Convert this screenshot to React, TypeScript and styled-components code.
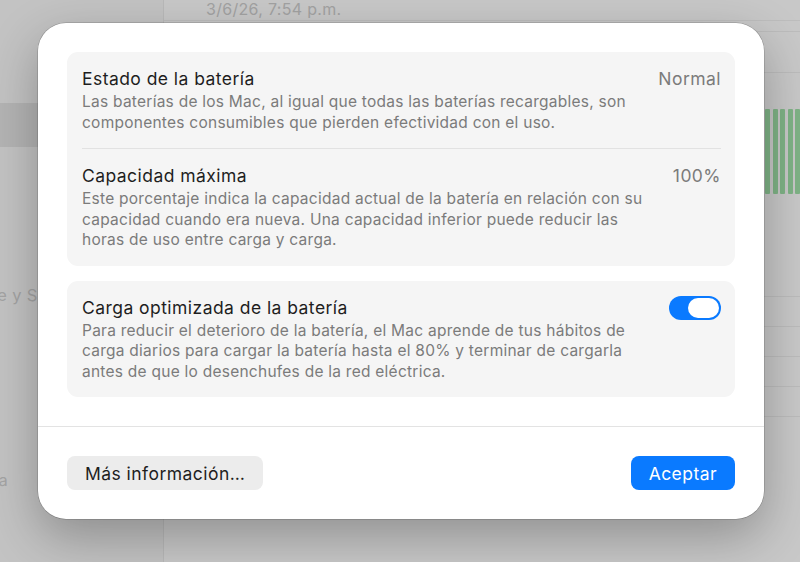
import React from "react";
import styled, { createGlobalStyle } from "styled-components";

const Global = createGlobalStyle`
  html, body { margin: 0; padding: 0; }
  body { font-family: Inter, "Noto Sans", "Liberation Sans", sans-serif; -webkit-font-smoothing: antialiased; }
`;

const Page = styled.div`
  position: relative;
  width: 800px;
  height: 562px;
  overflow: hidden;
  display: flex;
  background: #c6c6c6;
`;

const Sidebar = styled.aside`
  width: 163px;
  flex-shrink: 0;
  display: flex;
  flex-direction: column;
  padding-top: 103px;
  background: #c3c3c3;
  border-right: 1px solid #b9b9b9;
`;

const SideRow = styled.div<{ $selected?: boolean; $h: number; $right?: number }>`
  height: ${(p) => p.$h}px;
  display: flex;
  align-items: center;
  justify-content: flex-end;
  padding-right: ${(p) => p.$right ?? 0}px;
  background: ${(p) => (p.$selected ? "#b4b4b4" : "transparent")};
  color: #a4a4a4;
  font-size: 16.5px;
  letter-spacing: 0.3px;
  white-space: nowrap;
`;

const Main = styled.main`
  flex: 1;
  display: flex;
  flex-direction: column;
  background: #c8c8c8;
`;

const Header = styled.div`
  height: 22px;
  display: flex;
  align-items: center;
  padding-left: 42px;
  color: #a2a2a2;
  font-size: 16px;
  letter-spacing: 0.3px;
  border-bottom: 1px solid #bdbdbd;
  margin-top: -2px;
`;

const Line = styled.div<{ $gap: number }>`
  margin-top: ${(p) => p.$gap}px;
  height: 1px;
  background: #bcbcbc;
`;

const Chart = styled.div`
  margin-top: 36px;
  height: 85px;
  display: flex;
  justify-content: flex-end;
  gap: 2.5px;
`;

const Bar = styled.div`
  width: 5px;
  background: #7fb386;
  border-radius: 1px;
`;

const Modal = styled.div`
  position: absolute;
  left: 38px;
  top: 23px;
  width: 726px;
  height: 496px;
  background: #ffffff;
  border-radius: 28px;
  box-shadow: 0 0 0 0.5px rgba(0, 0, 0, 0.25), 0 18px 50px rgba(0, 0, 0, 0.28);
  display: flex;
  flex-direction: column;
  box-sizing: border-box;
`;

const Body = styled.div`
  padding: 29px 29px 0;
  display: flex;
  flex-direction: column;
  gap: 15px;
`;

const Card = styled.section`
  background: #f5f5f5;
  border-radius: 11px;
  padding: 0 14px 0 15px;
  display: flex;
  flex-direction: column;
`;

const Row = styled.div<{ $divider?: boolean }>`
  display: flex;
  align-items: flex-start;
  gap: 20px;
  padding: 16px 0 15px;
  border-top: ${(p) => (p.$divider ? "1px solid #e2e2e2" : "none")};
`;

const Texts = styled.div`
  flex: 1;
  display: flex;
  flex-direction: column;
  gap: 2px;
`;

const Title = styled.div`
  font-size: 17.5px;
  letter-spacing: 0.45px;
  line-height: 22px;
  color: #1e1e1e;
`;

const Desc = styled.div`
  font-size: 15.5px;
  letter-spacing: 0.25px;
  line-height: 20.5px;
  color: #7b7b7b;
  max-width: 572px;
`;

const Value = styled.div`
  font-size: 17.5px;
  letter-spacing: 0.45px;
  line-height: 22px;
  color: #7b7b7b;
`;

const Toggle = styled.div`
  margin-top: -1px;
  width: 52px;
  height: 24px;
  border-radius: 12px;
  background: #0a7aff;
  display: flex;
  align-items: center;
  justify-content: flex-end;
  padding: 2px;
  box-sizing: border-box;
  flex-shrink: 0;
`;

const Knob = styled.div`
  width: 31px;
  height: 20px;
  border-radius: 10px;
  background: #ffffff;
`;

const Divider = styled.div`
  margin-top: 29px;
  height: 1px;
  background: #e3e3e3;
`;

const Footer = styled.div`
  padding: 29px 29px 0;
  display: flex;
  justify-content: space-between;
`;

const Button = styled.button<{ $primary?: boolean }>`
  height: 34px;
  padding: 0 18px;
  border: none;
  border-radius: 8px;
  font-family: inherit;
  font-size: 17.5px;
  letter-spacing: 0.45px;
  background: ${(p) => (p.$primary ? "#0a7aff" : "#ececec")};
  color: ${(p) => (p.$primary ? "#ffffff" : "#1e1e1e")};
`;

export default function App() {
  const bars = Array.from({ length: 6 });
  return (
    <>
      <Global />
      <Page>
        <Sidebar>
          <SideRow $selected $h={44} />
          <SideRow $h={296} $right={110}>Apple Intelligence y Siri</SideRow>
          <SideRow $h={74} $right={155}>Batería</SideRow>
        </Sidebar>
        <Main>
          <Header>3/6/26, 7:54 p.m.</Header>
          <Line $gap={10} />
          <Line $gap={40} />
          <Chart>
            {bars.map((_, i) => (
              <Bar key={i} />
            ))}
          </Chart>
          <Line $gap={102} />
          <Line $gap={29} />
          <Line $gap={29} />
          <Line $gap={29} />
          <Line $gap={29} />
        </Main>
        <Modal>
          <Body>
            <Card>
              <Row>
                <Texts>
                  <Title>Estado de la batería</Title>
                  <Desc>
                    Las baterías de los Mac, al igual que todas las baterías recargables, son componentes consumibles que pierden efectividad con el uso.
                  </Desc>
                </Texts>
                <Value>Normal</Value>
              </Row>
              <Row $divider>
                <Texts>
                  <Title>Capacidad máxima</Title>
                  <Desc>
                    Este porcentaje indica la capacidad actual de la batería en relación con su capacidad cuando era nueva. Una capacidad inferior puede reducir las horas de uso entre carga y carga.
                  </Desc>
                </Texts>
                <Value>100%</Value>
              </Row>
            </Card>
            <Card>
              <Row>
                <Texts>
                  <Title>Carga optimizada de la batería</Title>
                  <Desc>
                    Para reducir el deterioro de la batería, el Mac aprende de tus hábitos de carga diarios para cargar la batería hasta el 80% y terminar de cargarla antes de que lo desenchufes de la red eléctrica.
                  </Desc>
                </Texts>
                <Toggle>
                  <Knob />
                </Toggle>
              </Row>
            </Card>
          </Body>
          <Divider />
          <Footer>
            <Button>Más información…</Button>
            <Button $primary>Aceptar</Button>
          </Footer>
        </Modal>
      </Page>
    </>
  );
}
